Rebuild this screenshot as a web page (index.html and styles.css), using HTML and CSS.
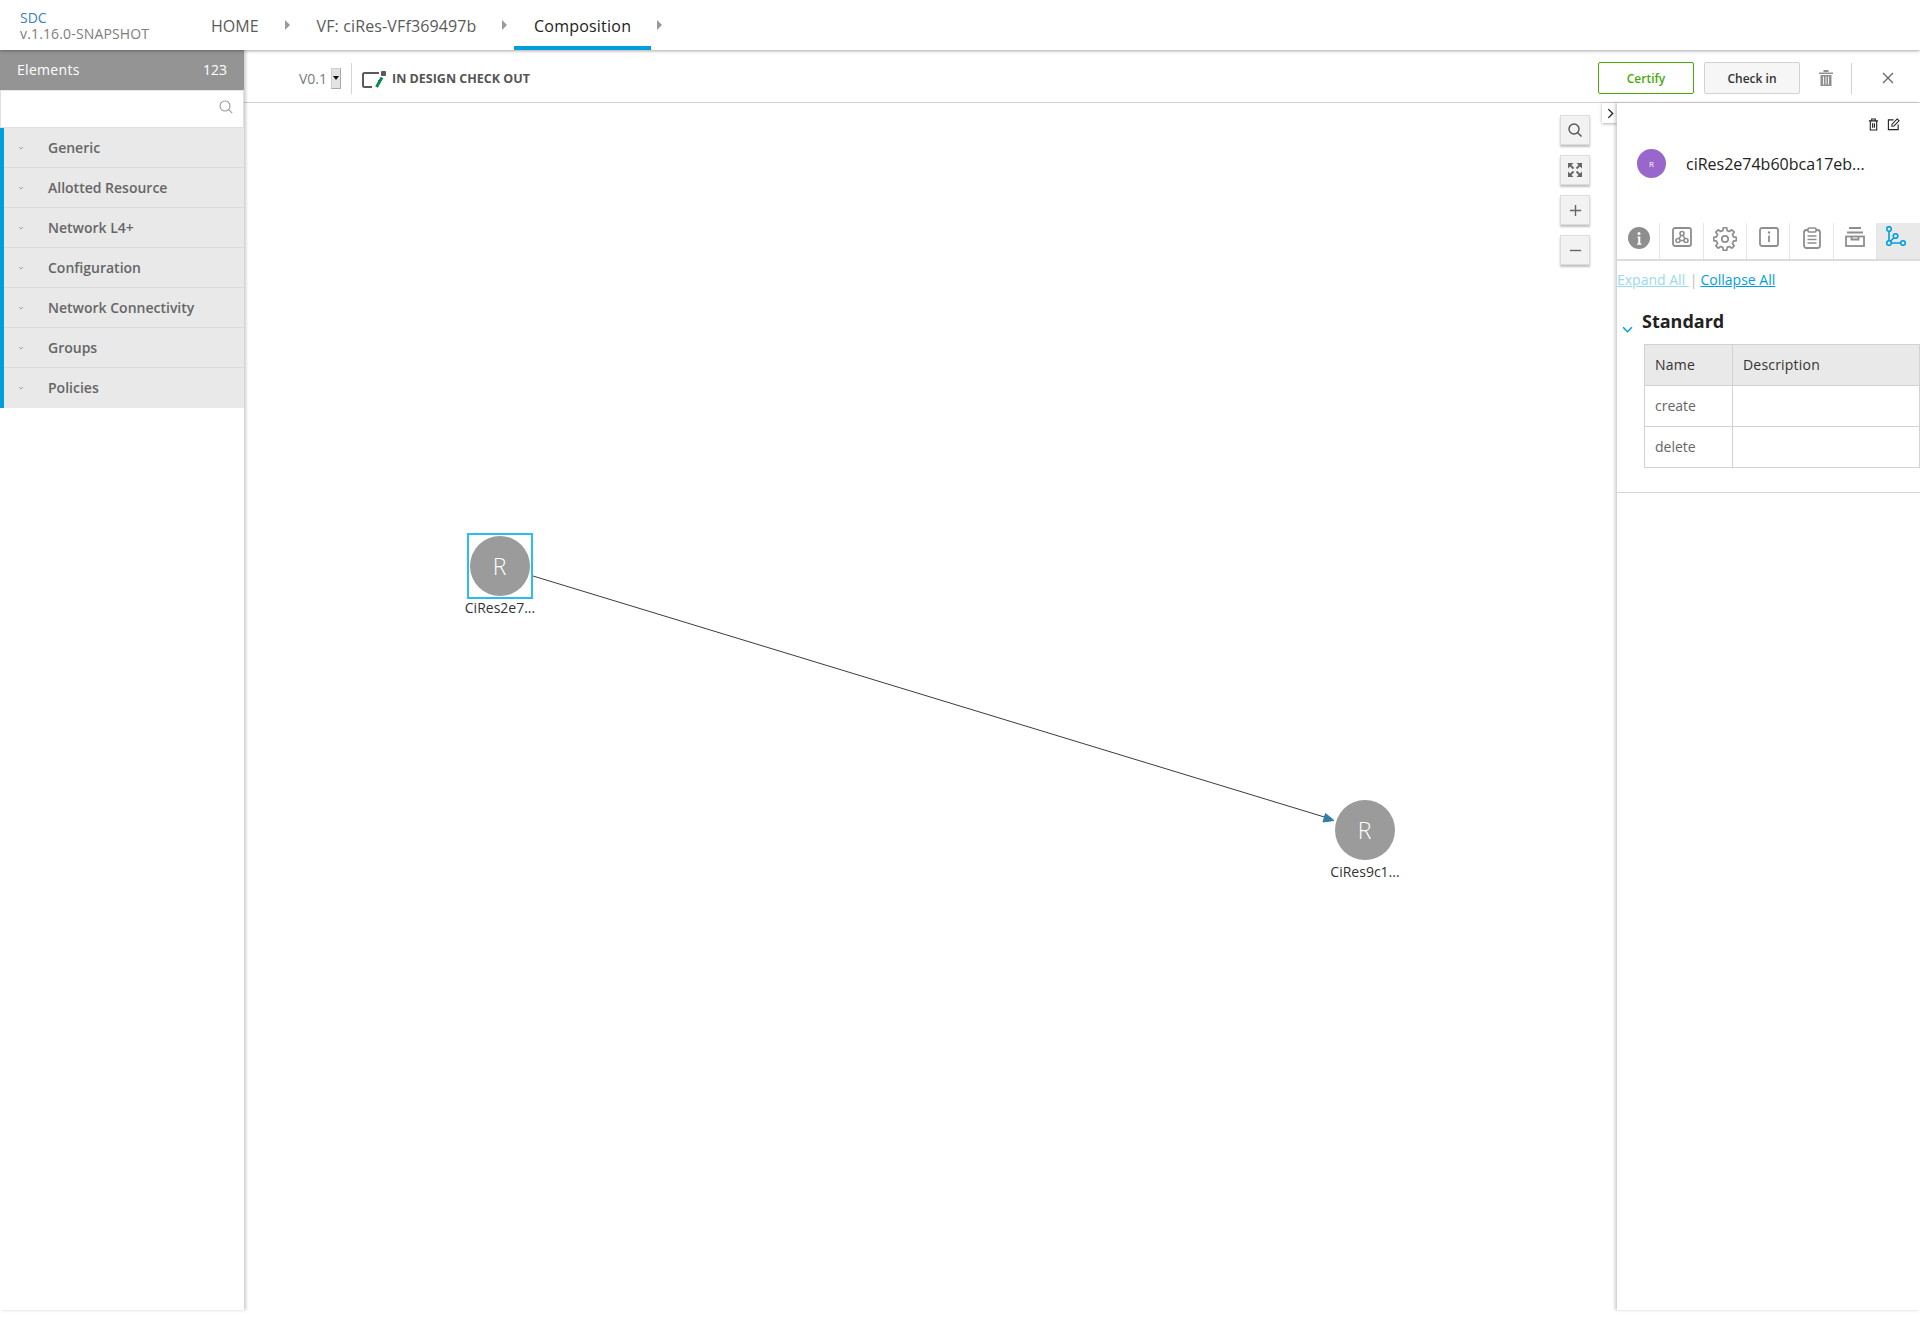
FILE: index.html
```html
<!DOCTYPE html>
<html lang="en">
<head>
<meta charset="utf-8">
<title>SDC Composition</title>
<link rel="stylesheet" href="styles.css">
</head>
<body>
<div class="app">
  <header class="topbar">
    <div class="brand"><div class="brand-name">SDC</div><div class="brand-ver">v.1.16.0-SNAPSHOT</div></div>
    <nav class="crumbs">
      <a class="crumb crumb-home">HOME</a><span class="caret"></span>
      <a class="crumb crumb-vf">VF: ciRes-VFf369497b</a><span class="caret"></span>
      <a class="crumb crumb-active">Composition</a><span class="caret"></span>
    </nav>
  </header>
  <div class="main">
    <aside class="sidebar">
      <div class="side-head"><span class="side-title">Elements</span><span>123</span></div>
      <div class="side-search">
        <svg class="search-ic" viewBox="0 0 16 16" width="16" height="16"><circle cx="7" cy="7" r="5" fill="none" stroke="#9a9a9a" stroke-width="1.1"/><path d="M10.7 10.7 14.2 14.2" stroke="#9a9a9a" stroke-width="1.1"/></svg>
      </div>
      <ul class="side-list">
        <li class="side-item"><svg class="chev" viewBox="0 0 6 4" width="6" height="4"><path d="M1 1 3 3 5 1" fill="none" stroke="#a0a0a0"/></svg>Generic</li>
        <li class="side-item"><svg class="chev" viewBox="0 0 6 4" width="6" height="4"><path d="M1 1 3 3 5 1" fill="none" stroke="#a0a0a0"/></svg>Allotted Resource</li>
        <li class="side-item"><svg class="chev" viewBox="0 0 6 4" width="6" height="4"><path d="M1 1 3 3 5 1" fill="none" stroke="#a0a0a0"/></svg>Network L4+</li>
        <li class="side-item"><svg class="chev" viewBox="0 0 6 4" width="6" height="4"><path d="M1 1 3 3 5 1" fill="none" stroke="#a0a0a0"/></svg>Configuration</li>
        <li class="side-item"><svg class="chev" viewBox="0 0 6 4" width="6" height="4"><path d="M1 1 3 3 5 1" fill="none" stroke="#a0a0a0"/></svg>Network Connectivity</li>
        <li class="side-item"><svg class="chev" viewBox="0 0 6 4" width="6" height="4"><path d="M1 1 3 3 5 1" fill="none" stroke="#a0a0a0"/></svg>Groups</li>
        <li class="side-item"><svg class="chev" viewBox="0 0 6 4" width="6" height="4"><path d="M1 1 3 3 5 1" fill="none" stroke="#a0a0a0"/></svg>Policies</li>
      </ul>
    </aside>
    <div class="content">
      <div class="toolbar">
        <div class="tb-left">
          <span class="version">V0.1</span>
          <span class="ver-select"><i></i></span>
          <span class="tb-div"></span>
          <svg class="status-ic" viewBox="0 0 24 18" width="24" height="18"><path d="M17 2H2.500a1.500 1.500 0 0 0-1.500 1.500v11A1.500 1.500 0 0 0 2.500 16H10M17 9v4" fill="none" stroke="#5a5a5a" stroke-width="2"/><rect x="19" y="0" width="5" height="5" rx="1" fill="#5a5a5a"/><path d="M20 6.500 14.500 16" stroke="#0a8a50" stroke-width="3"/></svg>
          <span class="status">IN DESIGN CHECK OUT</span>
        </div>
        <div class="tb-right">
          <button class="btn btn-green">Certify</button>
          <button class="btn btn-grey">Check in</button>
          <svg class="tb-trash" viewBox="0 0 14 16" width="14" height="16"><path d="M0 2.500h14V4H0zM4.500 0h5v2h-5zM1.500 5h11v11h-11z" fill="#8f8f8f"/><path d="M4.500 6.500v8M7 6.500v8M9.500 6.500v8" stroke="#fff" stroke-width=".9"/></svg>
          <span class="tb-div tb-div-r"></span>
          <svg class="tb-close" viewBox="0 0 12 12" width="12" height="12"><path d="M1 1 11 11M11 1 1 11" stroke="#666" stroke-width="1.300"/></svg>
        </div>
      </div>
      <div class="workspace">
        <section class="canvas">
          <svg class="edges" width="1373" height="1207" viewBox="0 0 1373 1207">
            <path d="M289 473 1082 714.500" stroke="#3c3c3c" stroke-width="1" fill="none"/>
            <path d="M1090 717.500 1079 719 1081.500 710.500Z" fill="#2f7fa8" stroke="#2f7fa8"/>
          </svg>
          <div class="node node-a">
            <div class="node-box selected"><div class="node-circle">R</div></div>
            <div class="node-label">CiRes2e7...</div>
          </div>
          <div class="node node-b">
            <div class="node-box"><div class="node-circle">R</div></div>
            <div class="node-label">CiRes9c1...</div>
          </div>
          <div class="zoom-tools">
            <button class="zoom-btn"><svg viewBox="0 0 16 16" width="16" height="16"><circle cx="7" cy="7" r="5" fill="none" stroke="#555" stroke-width="1.400"/><path d="M10.700 10.700 14.500 14.500" stroke="#555" stroke-width="1.400"/></svg></button>
            <button class="zoom-btn"><svg viewBox="0 0 14 14" width="14" height="14"><path d="M0 0h5.500L0 5.500zM14 0v5.500L8.500 0zM0 14V8.500L5.500 14zM14 14H8.500L14 8.500z" fill="#666"/><path d="M2 2 5.500 5.500M12 2 8.500 5.500M2 12 5.500 8.500M12 12 8.500 8.500" stroke="#666" stroke-width="1.800"/></svg></button>
            <button class="zoom-btn"><svg viewBox="0 0 14 14" width="13" height="13"><path d="M7 1v12M1 7h12" stroke="#666" stroke-width="1.500"/></svg></button>
            <button class="zoom-btn"><svg viewBox="0 0 14 14" width="13" height="13"><path d="M1 7h12" stroke="#666" stroke-width="1.500"/></svg></button>
          </div>
          <button class="panel-toggle"><svg viewBox="0 0 8 12" width="7" height="11"><path d="M1.500 1 6.500 6 1.500 11" fill="none" stroke="#222" stroke-width="1.500"/></svg></button>
        </section>
        <aside class="panel">
          <div class="panel-head">
            <div class="panel-actions">
              <svg viewBox="0 0 12 14" width="11" height="13"><path d="M1 3h10M4 3V1h4v2M2.500 3v10h7V3M5 5.500v5M7 5.500v5" fill="none" stroke="#222" stroke-width="1.200"/></svg>
              <svg viewBox="0 0 14 14" width="13" height="13"><path d="M7 2H1.500v10.500H12V7" fill="none" stroke="#222" stroke-width="1.200"/><path d="M5.500 6.500 11 1l2 2-5.500 5.500-2.300.3z" fill="none" stroke="#222" stroke-width="1.100"/></svg>
            </div>
            <div class="panel-title">
              <div class="avatar">R</div>
              <div class="panel-name">ciRes2e74b60bca17eb...</div>
            </div>
          </div>
          <div class="tabs">
            <div class="tab"><svg viewBox="0 0 22 22" width="22" height="22"><circle cx="11" cy="11" r="11" fill="#8e8e8e"/><circle cx="11" cy="6.500" r="1.500" fill="#fff"/><path d="M9.500 9.500h2.800v7h1.200v1.200H9v-1.200h1.200V10.700H9.500z" fill="#fff"/></svg></div>
            <div class="tab"><svg viewBox="0 0 20 20" width="20" height="20"><rect x="1" y="1" width="18" height="18" rx="2" fill="none" stroke="#8e8e8e" stroke-width="1.800"/><circle cx="10" cy="6.500" r="2" fill="none" stroke="#8e8e8e" stroke-width="1.600"/><circle cx="6" cy="13.500" r="2" fill="none" stroke="#8e8e8e" stroke-width="1.600"/><circle cx="14" cy="13.500" r="2" fill="none" stroke="#8e8e8e" stroke-width="1.600"/><path d="M9 8.300 7 11.800M11 8.300 13 11.800M8 13.500h4" stroke="#8e8e8e" stroke-width="1.600"/></svg></div>
            <div class="tab"><svg viewBox="0 0 24 24" width="24" height="24"><circle cx="12" cy="12" r="3.200" fill="none" stroke="#8e8e8e" stroke-width="1.700"/><path d="M10.300 1.500h3.400l.5 2.900 2.200.9 2.400-1.700 2.400 2.400-1.700 2.400.9 2.200 2.900.5v3.400l-2.900.5-.9 2.200 1.700 2.400-2.400 2.400-2.400-1.700-2.200.9-.5 2.900h-3.400l-.5-2.900-2.200-.9-2.400 1.700-2.400-2.400 1.700-2.400-.9-2.200-2.900-.5v-3.400l2.900-.5.9-2.200-1.700-2.400 2.400-2.400 2.400 1.700 2.200-.9z" transform="translate(0 -.8)" fill="none" stroke="#8e8e8e" stroke-width="1.700" stroke-linejoin="round"/></svg></div>
            <div class="tab"><svg viewBox="0 0 20 20" width="20" height="20"><rect x="1" y="1" width="18" height="18" rx="2" fill="none" stroke="#8e8e8e" stroke-width="1.800"/><path d="M10 8.500v6.500" stroke="#8e8e8e" stroke-width="1.800"/><circle cx="10" cy="5.500" r="1.200" fill="#8e8e8e"/></svg></div>
            <div class="tab"><svg viewBox="0 0 18 22" width="18" height="22"><rect x="1" y="3" width="16" height="18" rx="2.500" fill="none" stroke="#8e8e8e" stroke-width="1.800"/><rect x="5" y="1" width="8" height="4" rx="1" fill="#fff" stroke="#8e8e8e" stroke-width="1.600"/><path d="M4.500 9h9M4.500 12.500h9M4.500 16h9" stroke="#8e8e8e" stroke-width="1.600"/></svg></div>
            <div class="tab"><svg viewBox="0 0 20 20" width="20" height="20"><path d="M4 1h12M2 5.500h16" stroke="#8e8e8e" stroke-width="1.800"/><rect x="1" y="9.500" width="18" height="9.500" fill="none" stroke="#8e8e8e" stroke-width="1.800"/><path d="M6.500 9.500v3h7v-3" fill="none" stroke="#8e8e8e" stroke-width="1.800"/></svg></div>
            <div class="tab tab-active"><svg viewBox="0 0 20 20" width="20" height="20"><circle cx="3" cy="3" r="2.300" fill="none" stroke="#009fdb" stroke-width="1.600"/><circle cx="3" cy="17" r="2.300" fill="none" stroke="#009fdb" stroke-width="1.600"/><circle cx="17" cy="17" r="2.300" fill="none" stroke="#009fdb" stroke-width="1.600"/><circle cx="9.500" cy="10" r="2.300" fill="none" stroke="#009fdb" stroke-width="1.600"/><path d="M3 5.300V14.700M5.300 17h9.400M4.500 15.300 8 11.800" fill="none" stroke="#009fdb" stroke-width="1.600"/></svg></div>
          </div>
          <div class="links"><a class="link link-off">Expand All </a><span class="sep">|</span><a class="link">Collapse All</a></div>
          <div class="section">
            <div class="section-head">
              <svg class="section-chev" viewBox="0 0 12 8" width="11" height="7"><path d="M1 1.500 6 6.500 11 1.500" fill="none" stroke="#009fdb" stroke-width="1.800"/></svg>
              <h3 class="section-title">Standard</h3>
            </div>
            <table class="ops">
              <thead><tr><th class="col-name">Name</th><th>Description</th></tr></thead>
              <tbody>
                <tr><td>create</td><td></td></tr>
                <tr><td>delete</td><td></td></tr>
              </tbody>
            </table>
          </div>
        </aside>
      </div>
    </div>
  </div>
</div>
</body>
</html>
```

FILE: styles.css
```css
* { box-sizing: border-box; }
html, body { margin: 0; padding: 0; background: #fff; }
body { font-family: "Open Sans", "Liberation Sans", sans-serif; height: 1319px; overflow: hidden; color: #5a5a5a; }
.app { height: 1310px; display: flex; flex-direction: column; }

.topbar { height: 50px; flex: none; display: flex; position: relative; z-index: 3; box-shadow: 0 1px 3px rgba(0,0,0,.35); background: #fff; }
.brand { width: 211px; padding: 9px 0 0 20px; font-size: 14px; line-height: 17px; flex: none; }
.brand-name { color: #3b7fbe; height: 16px; }
.brand-ver { color: #7d7d7d; font-size: 14px; line-height: 18px; letter-spacing: .15px; }
.crumbs { display: flex; height: 50px; font-size: 16px; color: #5a5a5a; }
.crumb { display: block; height: 50px; padding-top: 2px; line-height: 49px; }
.crumb-active { padding: 2px 19.500px 0; width: 137px; color: #222; border-bottom: 4px solid #009fdb; white-space: nowrap; letter-spacing: .22px; }
.crumb-home { margin-right: 26px; }
.crumb-vf { margin-right: 26px; margin-left: 27px; letter-spacing: .13px; }
.caret { width: 0; height: 0; margin-top: 20px; border-left: 5px solid #9a9a9a; border-top: 5px solid transparent; border-bottom: 5px solid transparent; }
.crumb-vf + .caret { margin-right: 7px; }
.crumb-active + .caret { margin-left: 6px; }

.main { flex: 1; display: flex; min-height: 0; }
.sidebar { width: 244px; flex: none; background: #fff; box-shadow: 2px 0 3px rgba(0,0,0,.2); position: relative; z-index: 2; }
.side-head { height: 40px; background: #949494; color: #fff; display: flex; justify-content: space-between; align-items: center; padding: 0 17px 2px; font-size: 14px; font-weight: 500; }
.side-title { letter-spacing: .3px; }
.side-search { height: 38px; background: #fff; border: 1px solid #e0e0e0; border-top: 1px solid #e6e6e6; display: flex; justify-content: flex-end; align-items: center; padding: 0 9px 4px 0; }
.side-list { list-style: none; margin: 0; padding: 0; border-left: 4px solid #009fdb; }
.side-item { height: 40px; background: #e9e9e9; border-bottom: 1px solid #dcdcdc; padding-left: 44px; display: flex; align-items: center; font-size: 14px; font-weight: 600; color: #666; position: relative; }
.side-item:last-child { border-bottom-color: transparent; }
.chev { position: absolute; left: 13.500px; top: 18px; }

.content { flex: 1; min-width: 0; display: flex; flex-direction: column; }
.toolbar { height: 53px; flex: none; border-bottom: 1px solid #d2d2d2; display: flex; justify-content: space-between; align-items: center; padding-top: 4px; }
.tb-left { display: flex; align-items: center; padding-left: 55px; }
.version { font-size: 14px; color: #7a7a7a; width: 32px; }
.ver-select { width: 10px; height: 21px; background: #e3e3e3; border: 1px solid #cfcfcf; border-right-color: #aaa; border-bottom-color: #aaa; display: flex; align-items: center; justify-content: center; }
.ver-select i { width: 0; height: 0; border-left: 3px solid transparent; border-right: 3px solid transparent; border-top: 4px solid #111; }
.tb-div { width: 1px; height: 31px; background: #d2d2d2; margin-left: 10px; margin-right: 10px; }
.status-ic { margin-right: 6px; margin-top: 3px; }
.status { font-size: 12.500px; font-weight: 700; color: #555; white-space: nowrap; }
.tb-right { display: flex; align-items: center; padding-right: 26px; }
.btn { width: 96px; height: 32px; border-radius: 2px; font: 600 12px "Open Sans", sans-serif; padding: 0; }
.btn-green { background: #fff; border: 1px solid #4ca90c; color: #4ca90c; margin-right: 10px; }
.btn-grey { background: #f6f6f6; border: 1px solid #d2d2d2; color: #333; margin-right: 19px; }
.tb-div-r { margin-left: 18px; margin-right: 30px; }
.workspace { flex: 1; display: flex; min-height: 0; }

.canvas { flex: 1; position: relative; min-width: 0; }
.edges { position: absolute; left: 0; top: 0; }
.node { position: absolute; width: 90px; display: flex; flex-direction: column; align-items: center; }
.node-a { left: 211px; top: 430px; }
.node-b { left: 1076px; top: 694px; }
.node-box { width: 66px; height: 66px; border: 2px solid transparent; padding: 1px; }
.node-box.selected { border-color: #2cbcf0; }
.node-circle { width: 60px; height: 60px; border-radius: 50%; background: #9b9b9b; color: #fff; font-size: 23px; font-weight: 300; display: flex; align-items: center; justify-content: center; padding-right: 1px; }
.node-label { font-size: 14px; line-height: 18px; color: #333; white-space: nowrap; }
.zoom-tools { position: absolute; right: 27px; top: 12px; display: flex; flex-direction: column; gap: 10px; }
.zoom-btn { width: 30px; height: 30px; background: #f2f2f2; border: 1px solid #dcdcdc; box-shadow: 0 2px 2px rgba(0,0,0,.25); padding: 0; display: flex; align-items: center; justify-content: center; }
.panel-toggle { position: absolute; right: 0; top: 0; width: 15px; height: 20px; background: #fff; border: 0; padding: 0 0 0 2px; box-shadow: 0 1px 3px rgba(0,0,0,.3); display: flex; align-items: center; justify-content: center; }

.panel { width: 303px; flex: none; box-shadow: -2px 0 3px rgba(0,0,0,.2); position: relative; background: #fff; }
.panel-head { height: 120px; position: relative; }
.panel-actions { position: absolute; right: 20px; top: 15px; display: flex; gap: 8px; }
.panel-title { display: flex; align-items: center; padding: 46px 0 0 20px; }
.avatar { width: 29px; height: 29px; border-radius: 50%; background: #9966cc; color: #fff; font-size: 8px; font-weight: 400; display: flex; align-items: center; justify-content: center; flex: none; }
.panel-name { margin-left: 20px; font-size: 16px; color: #222; white-space: nowrap; margin-top: 1px; }
.tabs { height: 38px; display: flex; border-bottom: 2px solid #dcdcdc; }
.tab { width: 43.330px; flex: none; border-right: 1px solid #e6e6e6; display: flex; justify-content: center; padding: 4px 0 0 1px; }
.tab:last-child { border-right: 0; }
.tab-active { background: #e9e9e9; padding: 3px 4px 0 0; flex: 1; }
.links { padding-top: 9px; font-size: 14px; line-height: 20px; height: 40px; }
.link { color: #009fdb; text-decoration: underline; white-space: pre; }
.link-off { color: #99d9f1; }
.sep { color: #bbb; margin: 0 3px 0 1px; }
.section { border-bottom: 1px solid #d6d6d6; height: 192px; padding-top: 8px; }
.section-head { display: flex; align-items: flex-start; height: 35px; position: relative; }
.section-chev { position: absolute; left: 5px; top: 17px; }
.section-title { margin: 0 0 0 25px; font-size: 18px; line-height: 24px; font-weight: 700; color: #222; }
.ops { margin-left: 27px; width: 276px; border-collapse: collapse; font-size: 14px; table-layout: fixed; }
.ops th { background: #e9e9e9; font-weight: 400; color: #333; text-align: left; height: 41px; border: 1px solid #d2d2d2; padding: 0 10px 2px; letter-spacing: .2px; }
.ops th.col-name { width: 88px; }
.ops td { height: 41px; border: 1px solid #d2d2d2; padding: 0 10px 2px; color: #666; }
```
